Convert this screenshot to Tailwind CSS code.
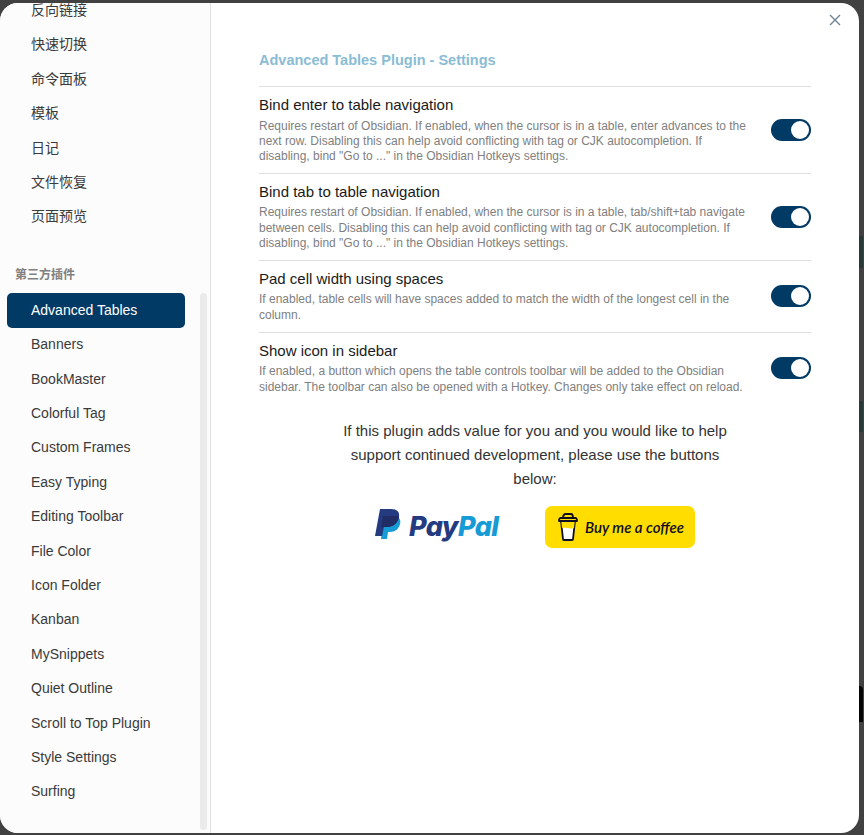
<!DOCTYPE html>
<html lang="en">
<head>
  <meta charset="UTF-8" />
  <title>Advanced Tables Plugin - Settings</title>
  <script src="https://cdn.jsdelivr.net/npm/@tailwindcss/browser@4"></script>
</head>
<body class="relative bg-[#414141] h-[835px] w-[864px] overflow-hidden font-['Liberation_Sans','Noto_Sans_CJK_SC',sans-serif]">
  <!-- bits of the app showing behind the modal -->
  <div class="absolute left-[859px] top-[236px] w-[4px] h-[32px] bg-[#2b3838]"></div>
  <div class="absolute left-[859px] top-[401px] w-[4px] h-[31px] bg-[#2b3838]"></div>
  <div class="absolute left-[859px] top-[686px] w-[4px] h-[36px] rounded-tr bg-[#050505]"></div>

  <div class="relative flex mt-[3px] w-[859px] h-[830px] bg-white rounded-[18px] overflow-hidden">

    <!-- sidebar -->
    <aside class="relative w-[211px] shrink-0 h-full bg-[#fcfcfc] border-r border-[#e0e0e0] overflow-hidden">
      <div class="absolute right-[3px] top-[290px] w-[7px] h-[537px] rounded bg-[#ebebeb]"></div>
      <nav class="relative -mt-[9.7px] pl-[7px] w-[185px] text-[14px] text-[#3a3a3a]">
        <a class="flex items-center h-[34.4px] pl-[24px]">反向链接</a>
        <a class="flex items-center h-[34.4px] pl-[24px]">快速切换</a>
        <a class="flex items-center h-[34.4px] pl-[24px]">命令面板</a>
        <a class="flex items-center h-[34.4px] pl-[24px]">模板</a>
        <a class="flex items-center h-[34.4px] pl-[24px]">日记</a>
        <a class="flex items-center h-[34.4px] pl-[24px]">文件恢复</a>
        <a class="flex items-center h-[34.4px] pl-[24px]">页面预览</a>
        <div class="pl-[8px] pt-[33px] pb-[9.9px] text-[12px] leading-[16px] font-semibold text-[#808080]">第三方插件</div>
        <a class="flex items-center h-[34.6px] pl-[24px] pt-[1px] rounded-[5px] bg-[#023a66] text-white">Advanced Tables</a>
        <a class="flex items-center h-[34.4px] pl-[24px]">Banners</a>
        <a class="flex items-center h-[34.4px] pl-[24px]">BookMaster</a>
        <a class="flex items-center h-[34.4px] pl-[24px]">Colorful Tag</a>
        <a class="flex items-center h-[34.4px] pl-[24px]">Custom Frames</a>
        <a class="flex items-center h-[34.4px] pl-[24px]">Easy Typing</a>
        <a class="flex items-center h-[34.4px] pl-[24px]">Editing Toolbar</a>
        <a class="flex items-center h-[34.4px] pl-[24px]">File Color</a>
        <a class="flex items-center h-[34.4px] pl-[24px]">Icon Folder</a>
        <a class="flex items-center h-[34.4px] pl-[24px]">Kanban</a>
        <a class="flex items-center h-[34.4px] pl-[24px]">MySnippets</a>
        <a class="flex items-center h-[34.4px] pl-[24px]">Quiet Outline</a>
        <a class="flex items-center h-[34.4px] pl-[24px]">Scroll to Top Plugin</a>
        <a class="flex items-center h-[34.4px] pl-[24px]">Style Settings</a>
        <a class="flex items-center h-[34.4px] pl-[24px]">Surfing</a>
      </nav>
    </aside>

    <!-- content -->
    <main class="flex-1 pl-[48px] pr-[48px] pt-[47px]">
      <h3 class="text-[14.5px] leading-[20px] font-bold text-[#8abcd4] pb-[16px] border-b border-[#dedede]">Advanced Tables Plugin - Settings</h3>

      <div class="flex items-center justify-between h-[87px] border-b border-[#dedede]">
        <div class="w-[496px]">
          <div class="text-[15px] leading-[19.5px] text-[#1a1a1a]">Bind enter to table navigation</div>
          <div class="mt-[4px] text-[12px] leading-[15.4px] text-[#808080]">Requires restart of Obsidian. If enabled, when the cursor is in a table, enter advances to the next row. Disabling this can help avoid conflicting with tag or CJK autocompletion. If disabling, bind "Go to ..." in the Obsidian Hotkeys settings.</div>
        </div>
        <div class="flex justify-end items-center w-[40px] h-[22px] rounded-full bg-[#023a66] pr-[2px]"><div class="w-[18px] h-[18px] rounded-full bg-white"></div></div>
      </div>

      <div class="flex items-center justify-between h-[87px] border-b border-[#dedede]">
        <div class="w-[496px] pb-[1px]">
          <div class="text-[15px] leading-[19.5px] text-[#1a1a1a]">Bind tab to table navigation</div>
          <div class="mt-[4px] text-[12px] leading-[15.4px] text-[#808080]">Requires restart of Obsidian. If enabled, when the cursor is in a table, tab/shift+tab navigate between cells. Disabling this can help avoid conflicting with tag or CJK autocompletion. If disabling, bind "Go to ..." in the Obsidian Hotkeys settings.</div>
        </div>
        <div class="flex justify-end items-center w-[40px] h-[22px] rounded-full bg-[#023a66] pr-[2px]"><div class="w-[18px] h-[18px] rounded-full bg-white"></div></div>
      </div>

      <div class="flex items-center justify-between h-[72px] border-b border-[#dedede]">
        <div class="w-[496px] pb-[1px]">
          <div class="text-[15px] leading-[19.5px] text-[#1a1a1a]">Pad cell width using spaces</div>
          <div class="mt-[4px] text-[12px] leading-[15.4px] text-[#808080]">If enabled, table cells will have spaces added to match the width of the longest cell in the column.</div>
        </div>
        <div class="flex justify-end items-center w-[40px] h-[22px] mb-[2px] rounded-full bg-[#023a66] pr-[2px]"><div class="w-[18px] h-[18px] rounded-full bg-white"></div></div>
      </div>

      <div class="flex items-center justify-between h-[72px]">
        <div class="w-[496px] pb-[2px]">
          <div class="text-[15px] leading-[19.5px] text-[#1a1a1a]">Show icon in sidebar</div>
          <div class="mt-[4px] text-[12px] leading-[15.4px] text-[#808080]">If enabled, a button which opens the table controls toolbar will be added to the Obsidian sidebar. The toolbar can also be opened with a Hotkey. Changes only take effect on reload.</div>
        </div>
        <div class="flex justify-end items-center w-[40px] h-[22px] mb-[2px] rounded-full bg-[#023a66] pr-[2px]"><div class="w-[18px] h-[18px] rounded-full bg-white"></div></div>
      </div>

      <p class="w-[400px] mx-auto mt-[14px] text-center text-[15px] leading-[24px] text-[#333333]">If this plugin adds value for you and you would like to help support continued development, please use the buttons below:</p>

      <div class="flex items-center mt-[15px] pl-[115px]">
        <!-- paypal -->
        <div class="flex items-center w-[171px] h-[42px] pl-[1px]">
          <svg class="w-[27px] h-[31px] -mt-[6px] shrink-0" viewBox="0 0 27 31">
            <path fill="#179bd7" d="M9 7h13c3 2 4 5 3 8-1 5-5 8-10 8h-2l-1 7H6z"/>
            <path fill="#253b80" d="M5 0h11c6 0 9 3 8 8-1 6-6 10-12 10H9l-2 9H0z"/>
            <path fill="#222d65" d="M8 7h15c.5 0 1 .5 1 1-1 6-6 10-12 10H6z"/>
          </svg>
          <span class="ml-[7px] text-[27px] leading-[30px] font-extrabold italic font-['Inter',sans-serif] tracking-[-0.6px] text-[#253b80]">Pay<span class="text-[#179bd7]">Pal</span></span>
        </div>
        <!-- buy me a coffee -->
        <div class="flex items-center w-[150px] h-[42px] rounded-[7px] bg-[#ffdd00] pl-[13px]">
          <svg class="w-[20px] h-[28px] shrink-0" viewBox="0 0 20 28" fill="none" stroke="#0d0c22" stroke-width="1.8" stroke-linejoin="round">
            <path fill="#ffffff" d="M3 8h14l-2 18a1 1 0 0 1-1 1H6a1 1 0 0 1-1-1z"/>
            <path fill="#ffdd00" d="M3.2 8h13.6l-.8 7c-4 1.500-8-1-12 0z" stroke="none"/>
            <path d="M1 8c0-2 0-3 2-3h14c2 0 2 1 2 3z"/>
            <path d="M5 5c0-3 1-4 3-4h5c2 0 2 2 2 4"/>
          </svg>
          <span class="ml-[7px] text-[15px] font-semibold italic font-['Lato',sans-serif] text-[#0d0c22] whitespace-nowrap">Buy me a coffee</span>
        </div>
      </div>
    </main>

    <!-- close -->
    <svg class="absolute right-[18px] top-[11px] w-[12px] h-[12px]" viewBox="0 0 12 12" fill="none" stroke="#6f8492" stroke-width="1.4">
      <path d="M1 1l10 10M11 1L1 11"/>
    </svg>
  </div>
</body>
</html>
